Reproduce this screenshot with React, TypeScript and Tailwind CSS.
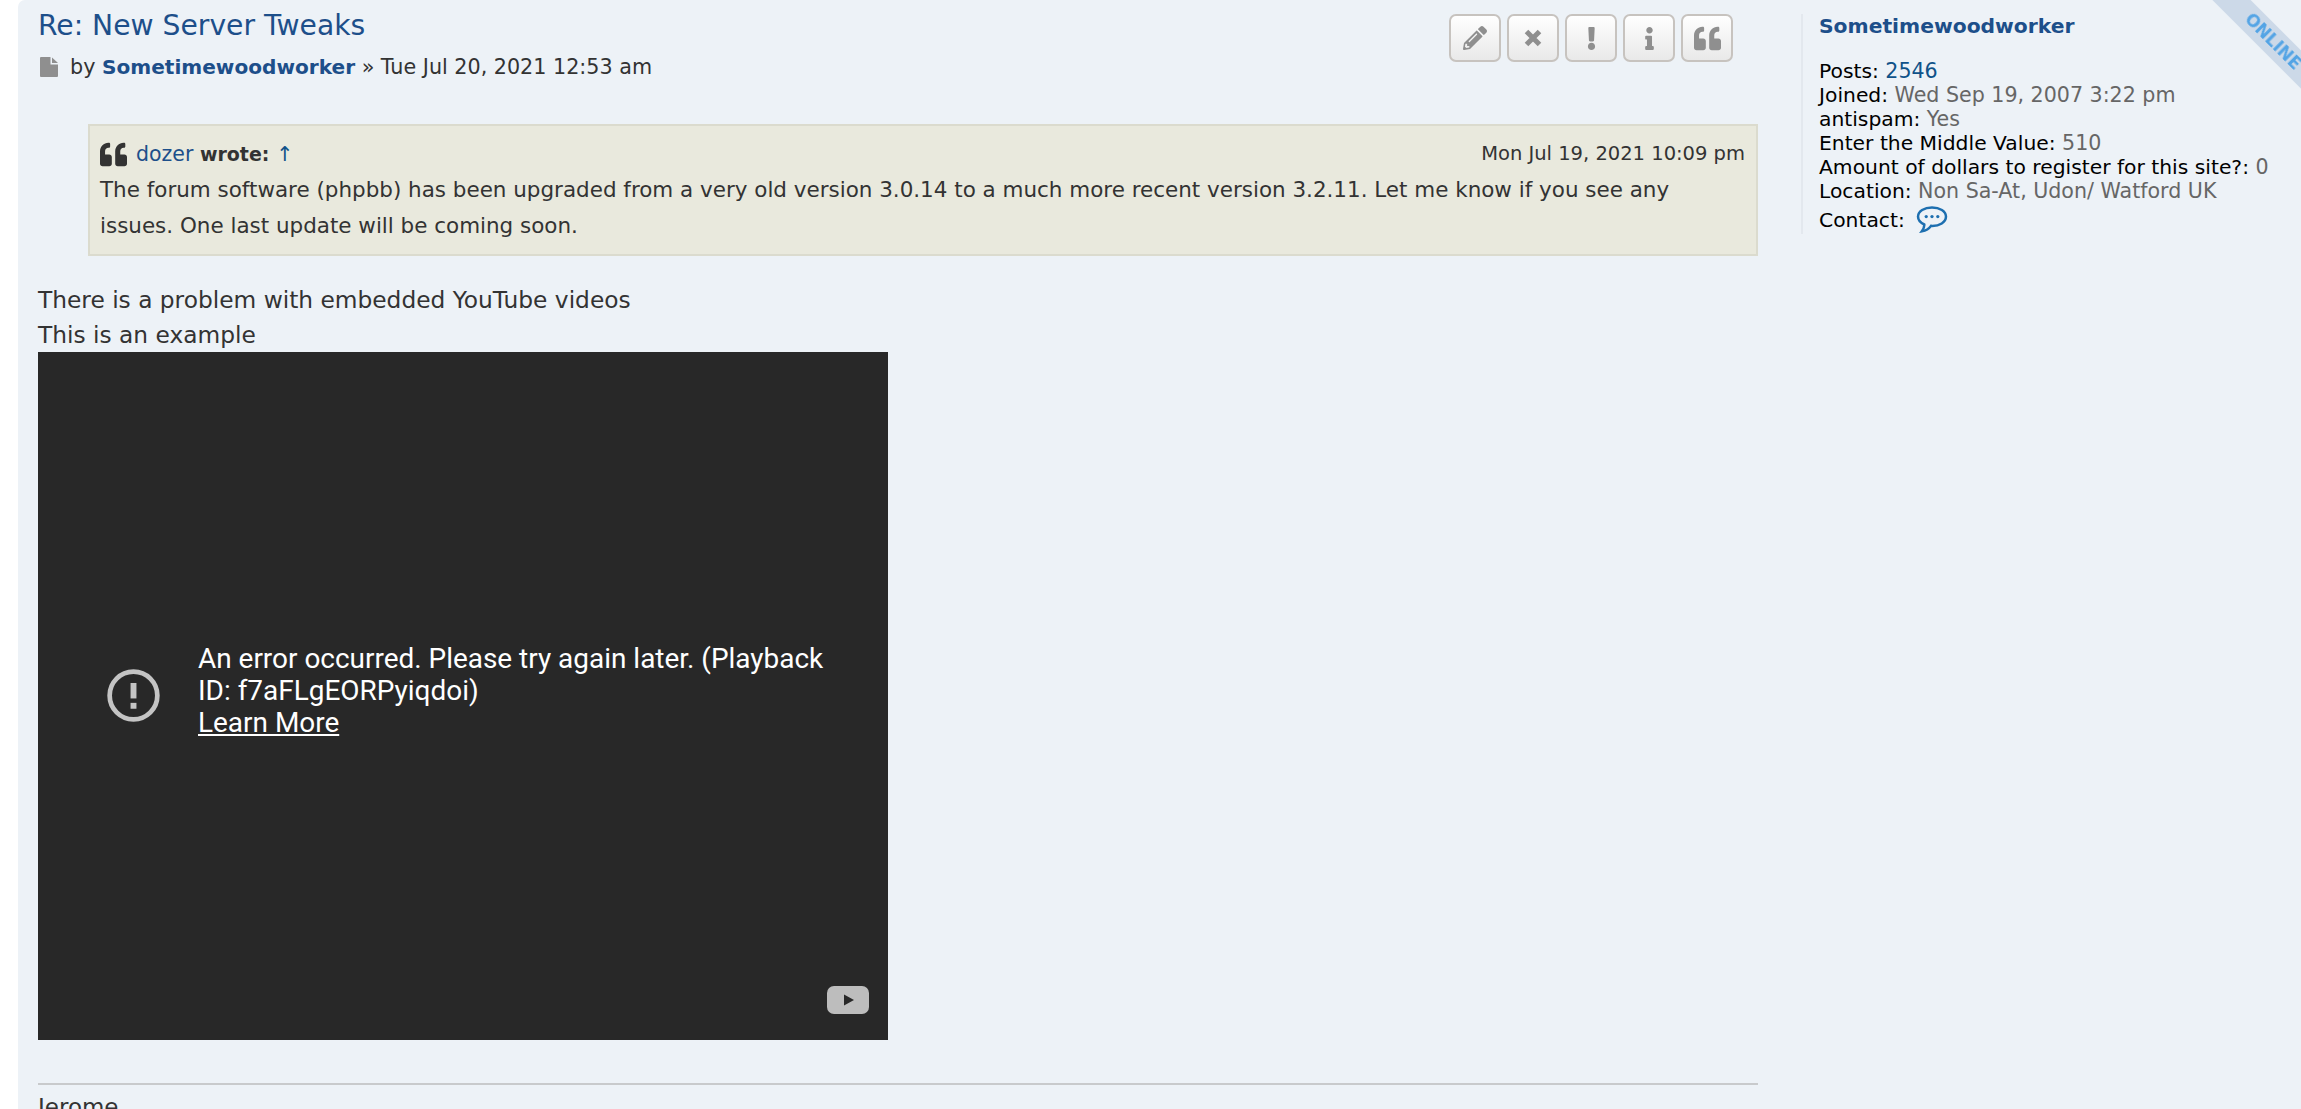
import { FaPencilAlt, FaExclamation, FaInfo, FaQuoteLeft } from 'react-icons/fa'

const sans = 'font-["DejaVu_Sans",sans-serif]'

function ActionButton({ children }: { children: React.ReactNode }) {
  return (
    <div className="flex h-[48px] w-[52px] items-center justify-center rounded-[7px] border-2 border-[#c7c3bf] bg-gradient-to-b from-white to-[#e9e9e9] text-[#8f8f8f]">
      {children}
    </div>
  )
}

function ProfileRow({ label, value, link }: { label: string; value: string; link?: boolean }) {
  return (
    <div className="h-[24px] leading-[24px] whitespace-nowrap text-black">
      {label}: <span className={link ? 'text-[20.6px] text-[#105289]' : 'text-[20.6px] text-[#666]'}>{value}</span>
    </div>
  )
}

export default function App() {
  return (
    <div className={`h-screen overflow-hidden bg-white pl-[18px] ${sans}`}>
      <div className="relative flex h-full overflow-hidden rounded-tl-[7px] bg-[#edf2f7]">
        {/* post body */}
        <div className="w-[1740px] shrink-0 pl-[20px]">
          <div className="flex h-[106px] justify-between pr-[25px]">
            <div>
              <h3 className="mt-[8px] text-[28.2px] leading-[36px] font-normal text-[#1d4f8a]">Re: New Server Tweaks</h3>
              <div className="mt-[8px] flex items-center text-[20.7px] leading-[30px] text-[#333]">
                <svg viewBox="0 0 18 20" className="mr-[12px] ml-[2px] h-[20px] w-[18px] text-[#8f8f8f]" fill="currentColor">
                  <path d="M0 1 Q0 0 1 0 H10.5 V7.5 H18 V19 Q18 20 17 20 H1 Q0 20 0 19 Z" />
                  <path d="M12 0.5 L18 6 H12 Z" />
                </svg>
                by&nbsp;<b className="text-[20.1px] text-[#1d4f8a]">Sometimewoodworker</b>&nbsp;» Tue Jul 20, 2021 12:53 am
              </div>
            </div>
            <div className="mt-[14px] flex gap-[6px]">
              <ActionButton><FaPencilAlt size={24} /></ActionButton>
              <ActionButton>
                <svg viewBox="0 0 18 18" className="size-[18px]" fill="none" stroke="currentColor" strokeWidth="5">
                  <path d="M2.5 2.5 L15.5 15.5 M15.5 2.5 L2.5 15.5" />
                </svg>
              </ActionButton>
              <ActionButton><FaExclamation size={23} /></ActionButton>
              <ActionButton><FaInfo size={23} /></ActionButton>
              <ActionButton><FaQuoteLeft size={27} /></ActionButton>
            </div>
          </div>

          <div className="mt-[18px] ml-[50px] h-[132px] w-[1670px] border-2 border-[#dbdbce] bg-[#e9e9dd] px-[10px] pt-[10px] text-[21.46px] leading-[36px] text-[#333]">
            <div className="flex items-center justify-between pr-[1px]">
              <div className="flex items-center text-[20.5px]">
                <FaQuoteLeft className="mr-[9px] size-[27px]" />
                <span className="text-[#1d4f8a]">dozer</span>&nbsp;<b className="text-[19px]">wrote:</b>&nbsp;<span className="text-[#105289]">↑</span>
              </div>
              <span className="text-[19.5px]">Mon Jul 19, 2021 10:09 pm</span>
            </div>
            <div>The forum software (phpbb) has been upgraded from a very old version 3.0.14 to a much more recent version 3.2.11. Let me know if you see any issues. One last update will be coming soon.</div>
          </div>

          <div className="mt-[27px] text-[23.3px] leading-[34.5px] text-[#333]">
            <div>There is a problem with embedded YouTube videos</div>
            <div>This is an example</div>
          </div>

          <div className='relative h-[688px] w-[850px] bg-[#282828] font-["Roboto",sans-serif] text-white'>
            <div className="flex pt-[291px] pl-[69px]">
              <svg viewBox="0 0 36 36" className="mt-[26px] size-[53px] shrink-0 text-[#c4c4c4]" fill="none">
                <circle cx="18" cy="18" r="16.2" stroke="currentColor" strokeWidth="3.2" />
                <rect x="16" y="9.5" width="4" height="10.5" fill="currentColor" />
                <rect x="16" y="23" width="4" height="4" fill="currentColor" />
              </svg>
              <div className="ml-[38px] w-[660px] text-[27.95px] leading-[32px]">
                <div>An error occurred. Please try again later. (Playback ID: f7aFLgEORPyiqdoi)</div>
                <div className="underline">Learn More</div>
              </div>
            </div>
            <svg viewBox="0 0 42 28" className="absolute right-[19px] bottom-[26px] h-[28px] w-[42px]">
              <rect width="42" height="28" rx="7" fill="#bdbdbd" />
              <path d="M17 8.5 L27 14 L17 19.5 Z" fill="#282828" />
            </svg>
          </div>

          <div className="mt-[43px] w-[1720px] border-t-2 border-[#c8cacc] pt-[4px] text-[23px] leading-[36px] text-[#333]">Jerome</div>
        </div>

        {/* profile column */}
        <div className="mt-[14px] ml-[43px] h-[220px] border-l-2 border-[#e3e8ee] pl-[16px] text-[20.3px]">
          <div className="mb-[21px] leading-[24px] text-[#1d4f8a]"><b>Sometimewoodworker</b></div>
          <ProfileRow label="Posts" value="2546" link />
          <ProfileRow label="Joined" value="Wed Sep 19, 2007 3:22 pm" />
          <ProfileRow label="antispam" value="Yes" />
          <ProfileRow label="Enter the Middle Value" value="510" />
          <ProfileRow label="Amount of dollars to register for this site?" value="0" />
          <ProfileRow label="Location" value="Non Sa-At, Udon/ Watford UK" />
          <div className="mt-[3px] flex items-center leading-[24px] text-black">
            Contact:
            <svg viewBox="0 0 32 28" className="ml-[11px] h-[27px] w-[32px]" fill="none" stroke="#1d6fb0" strokeWidth="2.6">
              <path d="M16 1.5 C8 1.5 1.5 5.5 1.5 11 C1.5 14.6 4.4 17.6 8 19.2 C8.2 21.5 7.2 24 5.5 26.3 C9.5 25.6 13 23.5 15 20.6 C24 21 30.5 16.8 30.5 11 C30.5 5.5 24 1.5 16 1.5 Z" />
              <circle cx="10" cy="11" r="1.7" fill="#1d6fb0" stroke="none" />
              <circle cx="16" cy="11" r="1.7" fill="#1d6fb0" stroke="none" />
              <circle cx="22" cy="11" r="1.7" fill="#1d6fb0" stroke="none" />
            </svg>
          </div>
        </div>

        {/* online ribbon */}
        <div className="absolute top-[28px] right-[-62px] flex h-[27px] w-[180px] rotate-45 items-center justify-center bg-[#ccd9e8] text-[17px] font-bold text-[#53a4e5] blur-[0.5px]">
          ONLINE
        </div>
      </div>
    </div>
  )
}
